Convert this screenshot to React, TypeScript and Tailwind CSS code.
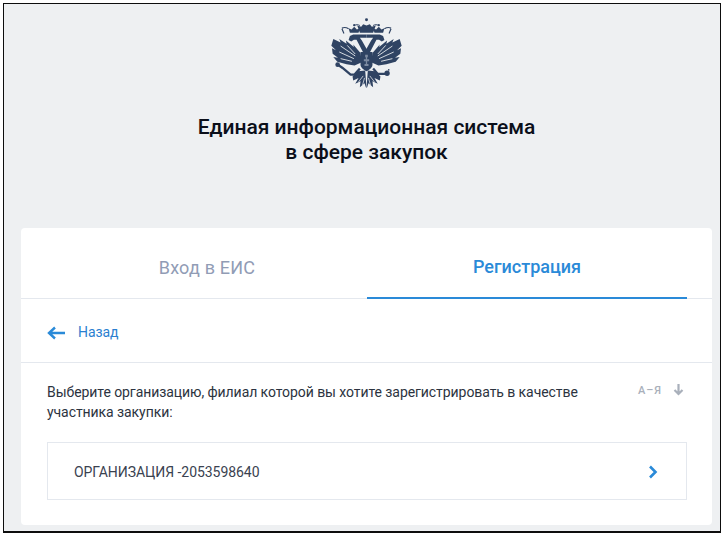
import React from "react";

const EC = "#2f4363";
const BG = "#eef0f2";

function Half() {
  return (
    <g>
      {/* small crown */}
      <path d="M120 84l-4-14 9 4 8-8 8 8 9-4-4 14z" fill={EC} />
      <circle cx="133" cy="61" r="3.500" fill={EC} />
      {/* ribbon */}
      <path d="M116 72c-8-5-14-5-20-2M96 72l6 14" stroke={EC} strokeWidth="3.500" fill="none" />
      <path d="M150 62c-6-3-12-3-16 0" stroke={EC} strokeWidth="3" fill="none" />
      {/* head and neck */}
      <path d="M116 106l4-12 10-5h40v10h-20l6 8 20 36v8h-12l-24-46-8 0-8 5z" fill={EC} />
      {/* wing */}
      <path d="M70 103l22 10-4-10 22 14-2-10 24 20-2-8 22 26 4 28-22 10-24-4-28-8-12-14 14 2-16-12-2-16 12 6-14-14z" fill={EC} />
      {/* slits between feathers */}
      <path d="M92 124l44 30M88 142l44 20M112 122l24 26M92 162l34 8" stroke={BG} strokeWidth="2.600" fill="none" />
      {/* tail half */}
      <path d="M166 198l-22 2-16 16 2 12 16-8-10 18 16-8-2 18 14-12 4 12 2 2z" fill={EC} />
      <path d="M146 232l14-18M158 242l6-22" stroke={BG} strokeWidth="2.200" fill="none" />
    </g>
  );
}

function Emblem() {
  return (
    <svg width="73" height="75" viewBox="60 40 220 225" fill="none">
      {/* central crown */}
      <circle cx="170" cy="45" r="4.500" fill={EC} />
      <path d="M150 84l-8-22 12 4 6-8 10 4 10-4 6 8 12-4-8 22z" fill={EC} />
      <Half />
      <g transform="translate(340 0) scale(-1 1)">
        <Half />
      </g>
      {/* shield */}
      <path d="M152 142h36v38c0 8-9 15-18 20-9-5-18-12-18-20z" fill={EC} />
      <path d="M166 150h8v8h-2v6h6v6h-6v8h4v6h-12v-6h4v-8h-6v-6h6v-6h-2z" fill="#7d8ba1" />
      {/* legs */}
      <path d="M150 192l-16 18-12 0-24-20-12-8" stroke={EC} strokeWidth="7" fill="none" />
      <circle cx="83" cy="180" r="7" fill={EC} />
      <path d="M190 192l14 16 26 0" stroke={EC} strokeWidth="7" fill="none" />
      <circle cx="232" cy="206" r="8" fill={EC} />
      <circle cx="237" cy="196" r="2.500" fill={EC} />
    </svg>
  );
}

export default function App() {
  return (
    <div className="h-[537px] w-[724px] bg-white pt-[3px] pr-[3px] pb-[4px] pl-[3px] font-['Roboto','Liberation_Sans',sans-serif]">
      <div className="flex h-[530px] flex-col border-t border-r border-b-2 border-l border-[#0d0d0d] bg-[#eef0f2]">
        <div className="mr-[8px] ml-[17px] flex h-[224px] flex-col items-center pt-[14px]">
          <Emblem />
          <h1 className="mt-[22px] text-center text-[21px] leading-[25px] font-medium text-[#0b0f1a]">
            Единая информационная система
            <br />в сфере закупок
          </h1>
        </div>
        <div className="mr-[8px] ml-[17px] h-[297px] rounded-[4px] bg-white">
          <div className="flex h-[71px] border-b border-[#e4e8ee] px-[26px]">
            <div className="flex w-[320px] shrink-0 items-center justify-center pt-[8px] text-[18px] tracking-[0.2px] text-[#919cb5]">
              Вход в ЕИС
            </div>
            <div className="flex h-[71px] w-[320px] shrink-0 items-center justify-center border-b-2 border-[#2a8ad8] pt-[8px] text-[18px] font-medium text-[#2a8ad8]">
              Регистрация
            </div>
          </div>
          <div className="flex h-[64px] items-center gap-[13px] border-b border-[#e4e8ee] px-[26px] pt-[4px] text-[14px] text-[#2a7fd0]">
            <svg width="18" height="14" viewBox="0 0 18 14" fill="none" stroke="#2a8ad8" strokeWidth="2.400">
              <path d="M18 7H2M8 1.500 2 7l6 5.500" />
            </svg>
            <span className="tracking-[-0.1px]">Назад</span>
          </div>
          <div className="flex justify-between pt-[19px] pr-[28px] pl-[26px]">
            <p className="w-[560px] text-[14px] leading-[20px] tracking-[-0.07px] text-[#2c3340]">
              Выберите организацию, филиал которой вы хотите зарегистрировать в качестве участника закупки:
            </p>
            <div className="flex items-start gap-[11px] pt-[2px] text-[#a9b0bb]">
              <span className="text-[11px] leading-[14px] font-medium tracking-[1px]">А–Я</span>
              <svg width="11" height="12" viewBox="0 0 11 12" fill="none" stroke="#a9b0bb" strokeWidth="2.200">
                <path d="M5.500 0v10M1.500 6l4 4 4-4" />
              </svg>
            </div>
          </div>
          <div className="mt-[20px] mr-[25px] ml-[26px] flex h-[58px] items-center justify-between border border-[#e4e8ee] pt-[2px] pr-[28px] pl-[26px]">
            <span className="text-[14px] tracking-[-0.05px] text-[#3a4250]">ОРГАНИЗАЦИЯ -2053598640</span>
            <svg width="10" height="14" viewBox="0 0 10 14" fill="none" stroke="#2a8ad8" strokeWidth="2.600">
              <path d="M2 1.500 7.500 7 2 12.500" />
            </svg>
          </div>
        </div>
      </div>
    </div>
  );
}
